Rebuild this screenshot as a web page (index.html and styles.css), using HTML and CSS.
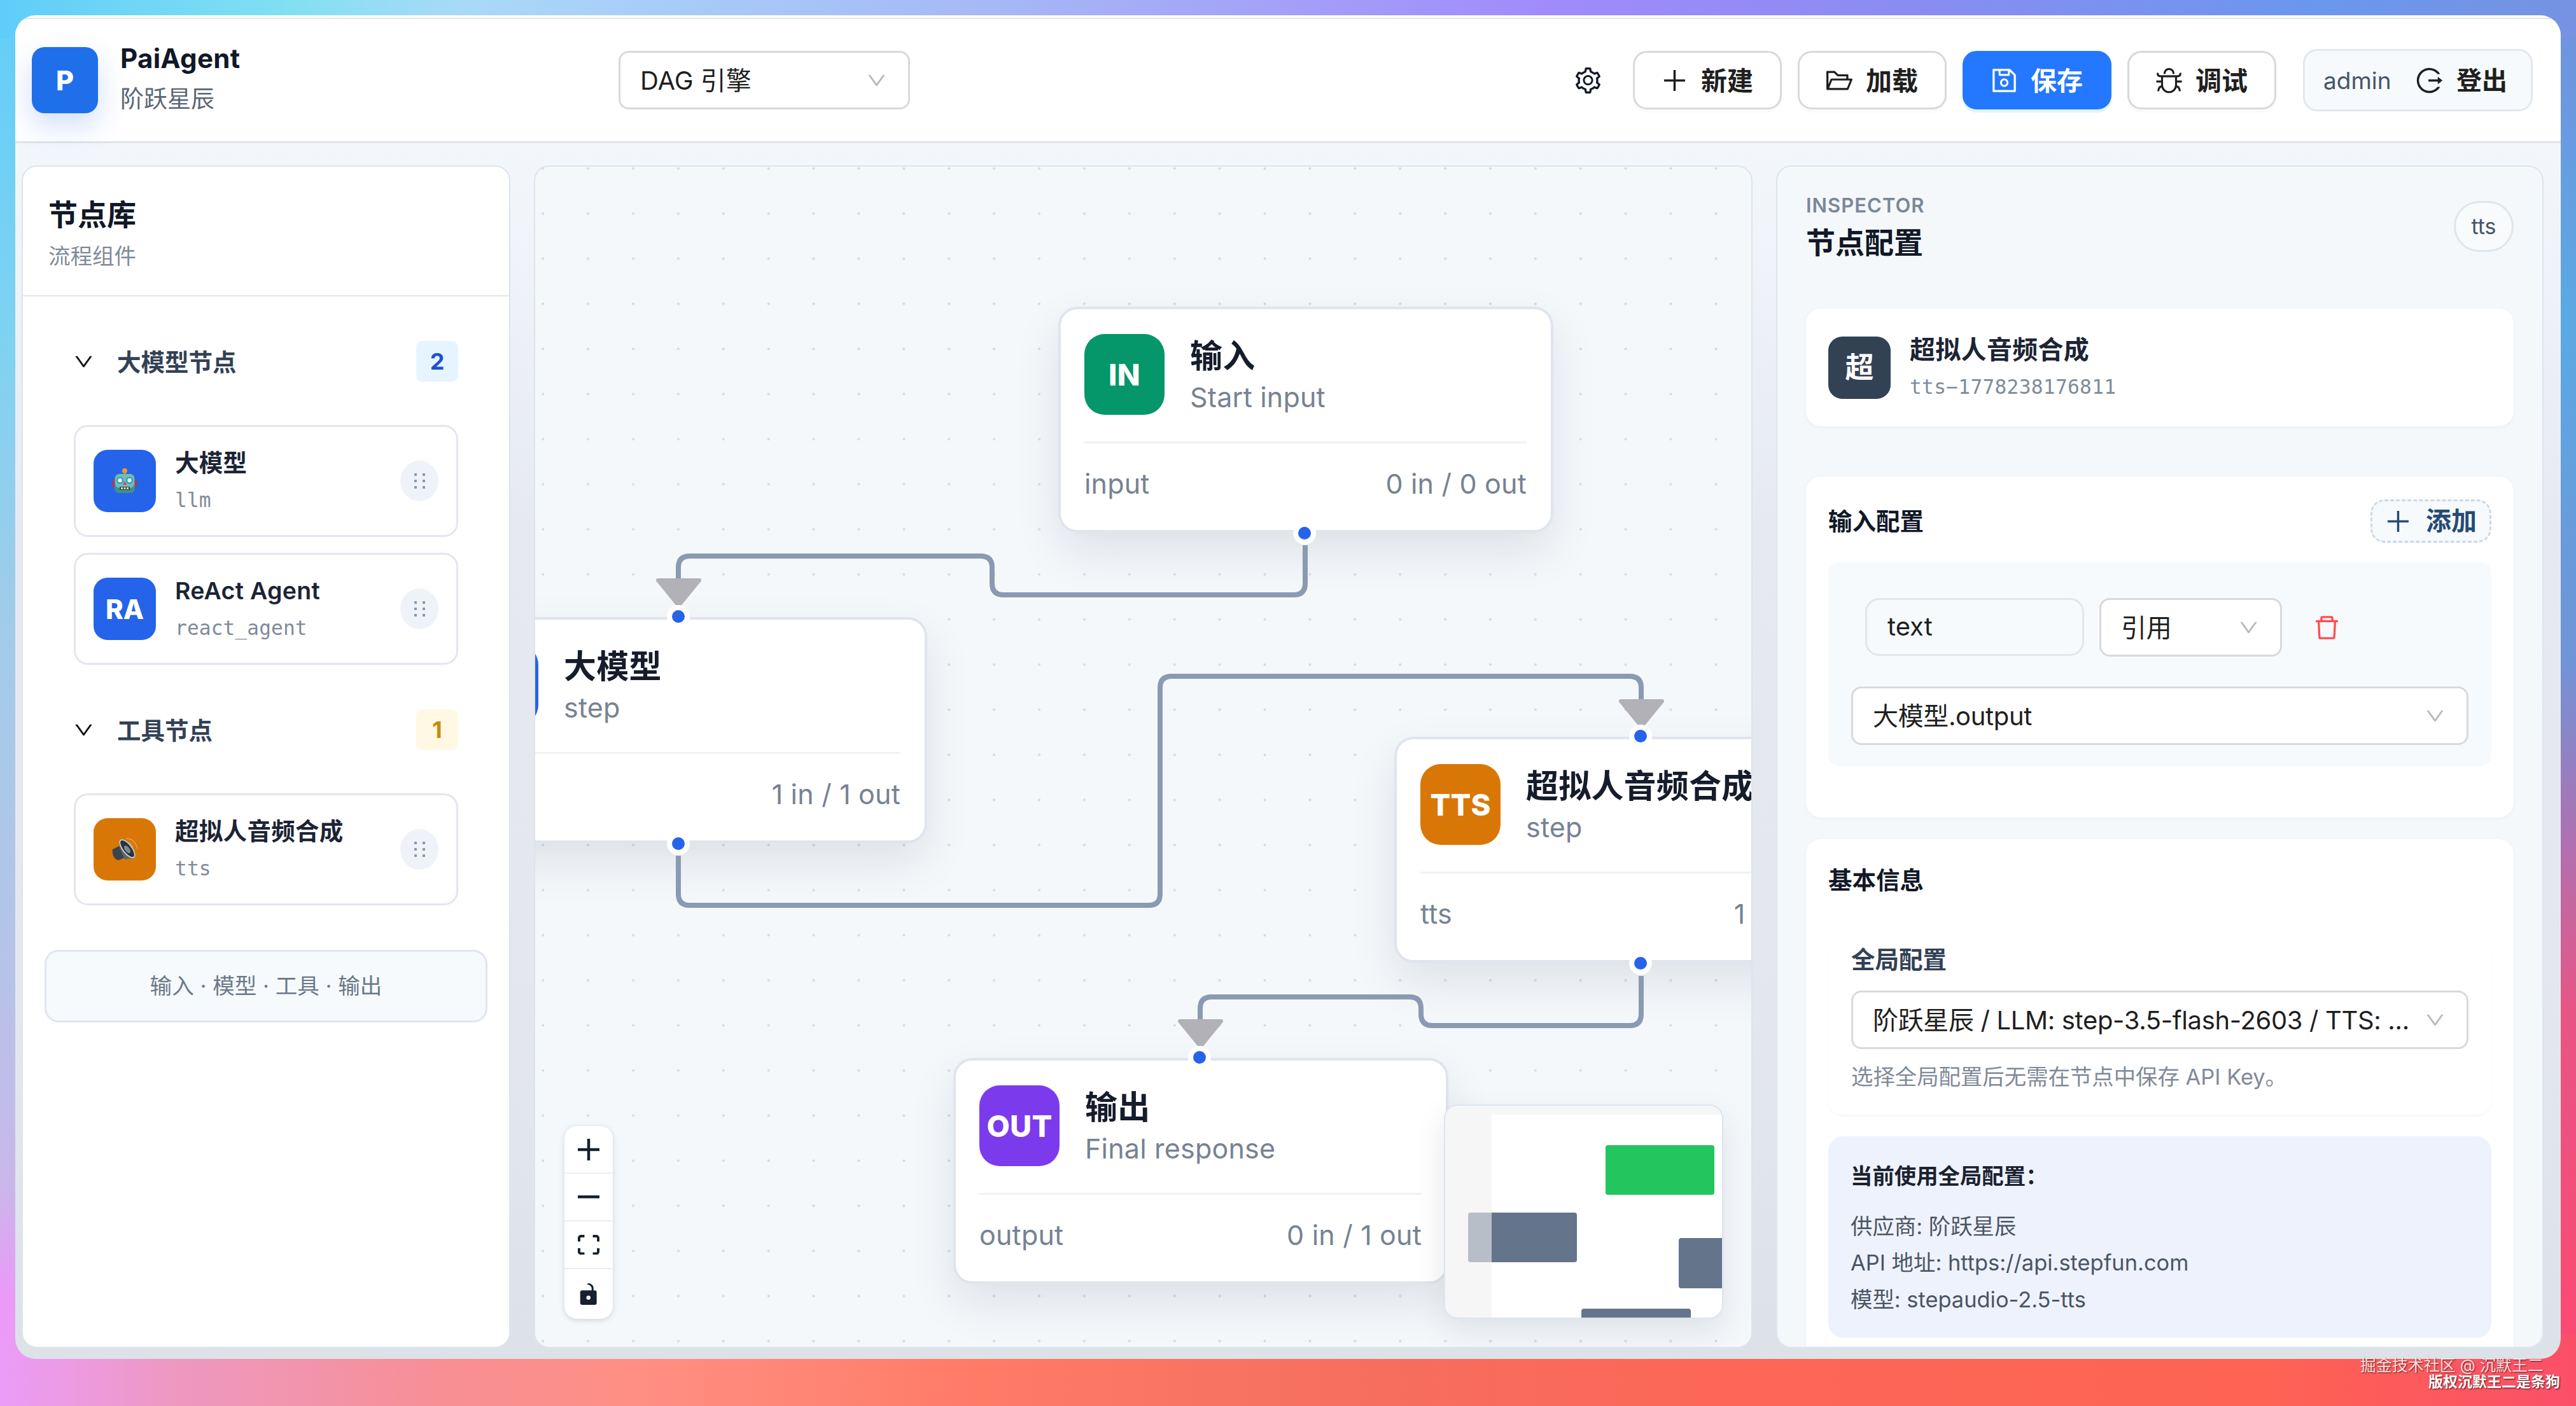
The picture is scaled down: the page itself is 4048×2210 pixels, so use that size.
FILE: index.html
```html
<!DOCTYPE html>
<html lang="zh-CN">

<head>
    <meta charset="UTF-8">
    <meta name="viewport" content="width=device-width, initial-scale=1.0">
    <title>PaiAgent</title>
    <link rel="stylesheet" href="styles.css">
</head>

<body>

    <!-- 图标 -->
    <svg class="sprite" aria-hidden="true">
        <symbol id="i-down" viewBox="64 64 896 896"><path d="M884 256h-75c-5.1 0-9.9 2.5-12.9 6.6L512 654.2 227.9 262.6c-3-4.1-7.8-6.6-12.9-6.6h-75c-6.5 0-10.3 7.4-6.5 12.7l352.6 486.1c12.8 17.6 39 17.6 51.7 0l352.6-486.1c3.9-5.3.1-12.7-6.4-12.7z"/></symbol>
        <symbol id="i-plus" viewBox="64 64 896 896"><path d="M482 152h60q8 0 8 8v704q0 8-8 8h-60q-8 0-8-8V160q0-8 8-8z"/><path d="M160 474h704q8 0 8 8v60q0 8-8 8H160q-8 0-8-8v-60q0-8 8-8z"/></symbol>
        <symbol id="i-setting" viewBox="64 64 896 896"><path d="M924.8 625.7l-65.5-56c3.1-19 4.7-38.4 4.7-57.8s-1.6-38.8-4.7-57.8l65.5-56a32.03 32.03 0 009.3-35.2l-.9-2.6a443.74 443.74 0 00-79.7-137.9l-1.8-2.1a32.12 32.12 0 00-35.1-9.5l-81.3 28.9c-30-24.6-63.5-44-99.7-57.6l-15.7-85a32.05 32.05 0 00-25.8-25.7l-2.7-.5c-52.1-9.4-106.9-9.4-159 0l-2.7.5a32.05 32.05 0 00-25.8 25.7l-15.8 85.4a351.86 351.86 0 00-99 57.4l-81.9-29.1a32 32 0 00-35.1 9.5l-1.8 2.1a446.02 446.02 0 00-79.7 137.9l-.9 2.6c-4.5 12.5-.8 26.5 9.3 35.2l66.3 56.6c-3.1 18.8-4.6 38-4.6 57.1 0 19.2 1.5 38.4 4.6 57.1L99 625.5a32.03 32.03 0 00-9.3 35.2l.9 2.6c18.1 50.4 44.9 96.9 79.7 137.9l1.8 2.1a32.12 32.12 0 0035.1 9.5l81.9-29.1c29.8 24.5 63.1 43.9 99 57.4l15.8 85.4a32.05 32.05 0 0025.8 25.7l2.7.5a449.4 449.4 0 00159 0l2.7-.5a32.05 32.05 0 0025.8-25.7l15.7-85a350 350 0 0099.7-57.6l81.3 28.9a32 32 0 0035.1-9.5l1.8-2.1c34.8-41.1 61.6-87.5 79.7-137.9l.9-2.6c4.5-12.3.8-26.3-9.3-35zM788.3 465.9c2.5 15.1 3.8 30.6 3.8 46.1s-1.3 31-3.8 46.1l-6.6 40.1 74.7 63.9a370.03 370.03 0 01-42.6 73.6L721 702.8l-31.4 25.8c-23.9 19.6-50.5 35-79.3 45.8l-38.1 14.3-17.9 97a377.5 377.5 0 01-85 0l-17.9-97.2-37.8-14.5c-28.5-10.8-55-26.2-78.7-45.7l-31.4-25.9-93.4 33.2c-17-22.9-31.2-47.6-42.6-73.6l75.5-64.5-6.5-40c-2.4-14.9-3.7-30.3-3.7-45.5 0-15.3 1.2-30.6 3.7-45.5l6.5-40-75.5-64.5c11.3-26.1 25.6-50.7 42.6-73.6l93.4 33.2 31.4-25.9c23.7-19.5 50.2-34.9 78.7-45.7l37.9-14.3 17.9-97.2c28.1-3.2 56.8-3.2 85 0l17.9 97 38.1 14.3c28.7 10.8 55.4 26.2 79.3 45.8l31.4 25.8 92.8-32.9c17 22.9 31.2 47.6 42.6 73.6L781.8 426l6.5 39.9zM512 326c-97.2 0-176 78.8-176 176s78.8 176 176 176 176-78.8 176-176-78.8-176-176-176zm79.2 255.2A111.6 111.6 0 01512 614c-29.9 0-58-11.7-79.2-32.8A111.6 111.6 0 01400 502c0-29.9 11.7-58 32.8-79.2C454 401.6 482.1 390 512 390c29.9 0 58 11.6 79.2 32.8A111.6 111.6 0 01624 502c0 29.9-11.7 58-32.8 79.2z"/></symbol>
        <symbol id="i-folder" viewBox="64 64 896 896"><path d="M928 444H820V330.4c0-17.7-14.3-32-32-32H473L355.7 186.2a8.15 8.15 0 00-5.5-2.2H96c-17.7 0-32 14.3-32 32v592c0 17.7 14.3 32 32 32h698c13 0 24.8-7.9 29.7-20l134-332c1.5-3.8 2.3-7.9 2.3-12 0-17.7-14.3-32-32-32zM136 256h188.5l119.6 114.4H748V444H238c-13 0-24.8 7.9-29.7 20L136 643.2V256zm635.3 512H159l103.3-256h612.4L771.3 768z"/></symbol>
        <symbol id="i-save" viewBox="64 64 896 896"><path d="M893.3 293.3L730.7 130.7c-7.5-7.5-16.7-13-26.7-16V112H144c-17.7 0-32 14.3-32 32v736c0 17.7 14.3 32 32 32h736c17.7 0 32-14.3 32-32V338.5c0-17-6.7-33.2-18.7-45.2zM384 184h256v104H384V184zm456 656H184V184h136v136c0 17.7 14.3 32 32 32h320c17.7 0 32-14.3 32-32V205.8l136 136V840zM512 442c-79.5 0-144 64.5-144 144s64.5 144 144 144 144-64.5 144-144-64.5-144-144-144zm0 224c-44.2 0-80-35.8-80-80s35.8-80 80-80 80 35.8 80 80-35.8 80-80 80z"/></symbol>
        <symbol id="i-bug" viewBox="64 64 896 896"><path fill="none" stroke="currentColor" stroke-width="68" d="M359 290V268a153 153 0 01306 0V290M119 250C119 330 160 366 220 366H804C864 366 905 330 905 250M272 366V672a240 240 0 00480 0V366M75 548H272M752 548H949M290 705C200 710 150 770 141 880M734 705C824 710 874 770 883 880"/></symbol>
        <symbol id="i-logout" viewBox="64 64 896 896"><path d="M868 732h-70.3c-4.8 0-9.3 2.1-12.3 5.8-7 8.5-14.5 16.7-22.4 24.5a353.84 353.84 0 01-112.7 75.9A352.8 352.8 0 01512.4 866c-47.9 0-94.3-9.4-137.9-27.8a353.84 353.84 0 01-112.7-75.9 353.28 353.28 0 01-76-112.5C167.3 606.2 158 559.9 158 512s9.4-94.2 27.8-137.8c17.8-42.1 43.4-80 76-112.5s70.5-58.1 112.7-75.9c43.6-18.4 90-27.8 137.9-27.8 47.9 0 94.3 9.3 137.9 27.8 42.2 17.8 80.1 43.4 112.7 75.9 7.9 7.9 15.3 16.1 22.4 24.5 3 3.7 7.6 5.8 12.3 5.8H868c6.3 0 10.2-7 6.7-12.3C798 160.5 663.8 81.6 511.3 82 271.7 82.6 79.6 277.1 82 516.4 84.4 751.9 276.2 942 512.4 942c152.1 0 285.7-78.8 362.3-197.7 3.4-5.3-.4-12.3-6.7-12.3zm88.9-226.3L815 393.7c-5.3-4.2-13-.4-13 6.3v76H488c-4.4 0-8 3.6-8 8v56c0 4.4 3.6 8 8 8h314v76c0 6.7 7.8 10.5 13 6.3l141.9-112a8 8 0 000-12.6z"/></symbol>
        <symbol id="i-delete" viewBox="64 64 896 896"><path d="M360 184h-8c4.4 0 8-3.6 8-8v8h304v-8c0 4.4 3.6 8 8 8h-8v72h72v-80c0-35.3-28.7-64-64-64H352c-35.3 0-64 28.7-64 64v80h72v-72zm504 72H160c-17.7 0-32 14.3-32 32v32c0 4.4 3.6 8 8 8h60.4l24.7 523c1.6 34.1 29.8 61 63.9 61h454c34.2 0 62.3-26.8 63.9-61l24.7-523H888c4.4 0 8-3.6 8-8v-32c0-17.7-14.3-32-32-32zM731.3 840H292.7l-24.2-512h487l-24.2 512z"/></symbol>
        <symbol id="i-drag" viewBox="0 0 60 60"><path d="M22 18h4v4h-4zM35 18h4v4h-4zM22 28h4v4h-4zM35 28h4v4h-4zM22 38h4v4h-4zM35 38h4v4h-4z"/></symbol>
    </svg>

    <div class="window">
        <!-- 顶部工具栏 -->
        <header class="header">
            <div class="brand">
                <div class="brand-logo">P</div>
                <div class="brand-text">
                    <div class="brand-name">PaiAgent</div>
                    <div class="brand-sub">阶跃星辰</div>
                </div>
            </div>
            <div class="select engine"><span>DAG 引擎</span><svg class="arrow"><use href="#i-down"/></svg></div>
            <div class="actions">
                <button class="btn-icon"><svg class="icon"><use href="#i-setting"/></svg></button>
                <button class="btn"><svg class="icon"><use href="#i-plus"/></svg><span>新建</span></button>
                <button class="btn"><svg class="icon"><use href="#i-folder"/></svg><span>加载</span></button>
                <button class="btn btn-primary"><svg class="icon"><use href="#i-save"/></svg><span>保存</span></button>
                <button class="btn"><svg class="icon"><use href="#i-bug"/></svg><span>调试</span></button>
                <div class="user">
                    <span class="user-name">admin</span>
                    <svg class="icon"><use href="#i-logout"/></svg>
                    <span class="logout">登出</span>
                </div>
            </div>
        </header>

        <main class="main">
            <!-- 节点库 -->
            <aside class="panel sidebar">
                <div class="sidebar-head">
                    <h2>节点库</h2>
                    <p>流程组件</p>
                </div>
                <div class="sidebar-body">
                    <div class="group">
                        <div class="group-row">
                            <svg class="group-arrow"><use href="#i-down"/></svg>
                            <span>大模型节点</span>
                            <b class="count">2</b>
                        </div>
                        <div class="item">
                            <div class="item-icon">
                                <svg width="38" height="40" viewBox="0 0 38 40">
                                    <rect x="0" y="17" width="6" height="13" rx="2" fill="#b5364a"/>
                                    <rect x="32" y="17" width="6" height="13" rx="2" fill="#b5364a"/>
                                    <rect x="17" y="4" width="4" height="7" fill="#7a8a90"/>
                                    <circle cx="19" cy="4" r="4" fill="#f09a1c"/>
                                    <rect x="3" y="9" width="32" height="30" rx="7" fill="#3f8f92"/>
                                    <rect x="4" y="9" width="30" height="22" rx="7" fill="#74bcba"/>
                                    <circle cx="11.500" cy="19" r="5.500" fill="#2b9fc0"/>
                                    <circle cx="26.500" cy="19" r="5.500" fill="#2b9fc0"/>
                                    <circle cx="11.500" cy="19" r="3.200" fill="#e8fbff"/>
                                    <circle cx="26.500" cy="19" r="3.200" fill="#e8fbff"/>
                                    <path d="M19 20l3 6h-6z" fill="#d8404a"/>
                                    <rect x="11" y="29" width="16" height="5" rx="1" fill="#26454a"/>
                                    <path d="M13 30h3v3h-3zM17.500 30h3v3h-3zM22 30h3v3h-3z" fill="#f4d68c"/>
                                </svg>
                            </div>
                            <div class="item-text"><b>大模型</b><code>llm</code></div>
                            <svg class="handle"><use href="#i-drag"/></svg>
                        </div>
                        <div class="item">
                            <div class="item-icon">RA</div>
                            <div class="item-text"><b>ReAct Agent</b><code>react_agent</code></div>
                            <svg class="handle"><use href="#i-drag"/></svg>
                        </div>
                    </div>
                    <div class="group">
                        <div class="group-row">
                            <svg class="group-arrow"><use href="#i-down"/></svg>
                            <span>工具节点</span>
                            <b class="count count-tool">1</b>
                        </div>
                        <div class="item">
                            <div class="item-icon item-icon-tool">
                                <svg width="42" height="40" viewBox="0 0 42 40">
                                    <path d="M2 20l10-5 9 18-9 4q-6 0-9-7-2-6-1-10z" fill="#3c444b"/>
                                    <path d="M12 15L15 4 35 34 21 36z" fill="#5d676f"/>
                                    <ellipse cx="25" cy="19" rx="8" ry="18" transform="rotate(-38 25 19)" fill="#2c3338"/>
                                    <ellipse cx="25" cy="19" rx="7" ry="17" transform="rotate(-38 25 19)" fill="none" stroke="#c3ccd0" stroke-width="2"/>
                                    <ellipse cx="25" cy="20" rx="3.500" ry="7" transform="rotate(-38 25 20)" fill="#7d8b93"/>
                                    <path d="M27 9q6 3 7 10M23 3q14 0 18 16" fill="none" stroke="#d9a45c" stroke-width="1.500"/>
                                </svg>
                            </div>
                            <div class="item-text"><b>超拟人音频合成</b><code>tts</code></div>
                            <svg class="handle"><use href="#i-drag"/></svg>
                        </div>
                    </div>
                    <div class="legend">输入 · 模型 · 工具 · 输出</div>
                </div>
            </aside>

            <!-- 画布 -->
            <section class="panel canvas">
                <div class="node node-input">
                    <div class="node-head">
                        <div class="node-icon">IN</div>
                        <div class="node-text"><b>输入</b><span>Start input</span></div>
                    </div>
                    <div class="node-foot"><span>input</span><span>0 in / 0 out</span></div>
                    <i class="port port-out"></i>
                </div>
                <div class="node node-llm">
                    <div class="node-head">
                        <div class="node-icon"></div>
                        <div class="node-text"><b>大模型</b><span>step</span></div>
                    </div>
                    <div class="node-foot"><span></span><span>1 in / 1 out</span></div>
                    <i class="port port-in"></i>
                    <i class="port port-out"></i>
                </div>
                <div class="node node-tts">
                    <div class="node-head">
                        <div class="node-icon">TTS</div>
                        <div class="node-text"><b>超拟人音频合成</b><span>step</span></div>
                    </div>
                    <div class="node-foot"><span>tts</span><span>1 in / 1 out</span></div>
                    <i class="port port-in"></i>
                    <i class="port port-out"></i>
                </div>
                <div class="node node-output">
                    <div class="node-head">
                        <div class="node-icon">OUT</div>
                        <div class="node-text"><b>输出</b><span>Final response</span></div>
                    </div>
                    <div class="node-foot"><span>output</span><span>0 in / 1 out</span></div>
                    <i class="port port-in"></i>
                </div>

                <!-- 连线 -->
                <svg class="edges" viewBox="842 263 1909 1854">
                    <g class="edge">
                        <path d="M2051 857V917Q2051 935 2033 935H1577Q1559 935 1559 917V892Q1559 874 1541 874H1084Q1066 874 1066 892V912"/>
                        <path d="M1066 1345V1405Q1066 1423 1084 1423H1805Q1823 1423 1823 1405V1081Q1823 1063 1841 1063H2561Q2579 1063 2579 1081V1101"/>
                        <path d="M2579 1534V1594Q2579 1612 2561 1612H2251Q2233 1612 2233 1594V1585Q2233 1567 2215 1567H1904Q1886 1567 1886 1585V1605"/>
                    </g>
                    <g class="edge-arrow">
                        <path d="M1034 912H1099L1068 950H1065Z"/>
                        <path d="M2547 1102H2612L2581 1140H2578Z"/>
                        <path d="M1854 1605H1919L1888 1643H1885Z"/>
                    </g>
                </svg>

                <div class="controls">
                    <button><svg viewBox="0 0 32 32"><path d="M32 18.133H18.133V32h-4.266V18.133H0v-4.266h13.867V0h4.266v13.867H32z"/></svg></button>
                    <button><svg viewBox="0 0 32 5"><path d="M0 0h32v4.200H0z"/></svg></button>
                    <button><svg viewBox="0 0 32 30"><path d="M3.692 4.630c0-.53.4-.938.939-.938h5.215V0H4.708C2.130 0 0 2.054 0 4.630v5.216h3.692V4.631zM27.354 0h-5.200v3.692h5.170c.53 0 .984.4.984.939v5.215H32V4.631A4.624 4.624 0 0027.354 0zm.954 24.830c0 .532-.4.94-.939.94h-5.215v3.768h5.215c2.577 0 4.631-2.130 4.631-4.707v-5.139h-3.692v5.139zm-23.677.94c-.531 0-.939-.4-.939-.94v-5.138H0v5.139c0 2.577 2.130 4.707 4.708 4.707h5.138V25.770H4.631z"/></svg></button>
                    <button><svg viewBox="0 0 25 32"><path d="M21.333 10.667H19.810V7.619C19.810 3.429 16.380 0 12.190 0c-4.114 1.828-1.370 2.133.305 2.438 1.676.305 4.420 2.590 4.420 5.181v3.048H3.047A3.056 3.056 0 000 13.714v15.238A3.056 3.056 0 003.048 32h18.285a3.056 3.056 0 003.048-3.048V13.714a3.056 3.056 0 00-3.048-3.047zM12.190 24.533a3.056 3.056 0 01-3.047-3.047 3.056 3.056 0 013.047-3.048 3.056 3.056 0 013.048 3.048 3.056 3.056 0 01-3.048 3.047z"/></svg></button>
                </div>

                <svg class="minimap" viewBox="0 0 435 333">
                    <rect x="252" y="62" width="171" height="78" rx="4" fill="#22c55e"/>
                    <rect x="36" y="168" width="171" height="78" rx="4" fill="#64748b"/>
                    <rect x="367" y="208" width="171" height="79" rx="4" fill="#64748b"/>
                    <rect x="214" y="319" width="172" height="78" rx="4" fill="#64748b"/>
                    <path class="minimap-mask" d="M0 0H435V14H73V333H0z"/>
                </svg>
            </section>

            <!-- 节点配置 -->
            <aside class="panel inspector">
                <div class="inspector-head">
                    <div>
                        <div class="eyebrow">INSPECTOR</div>
                        <h2>节点配置</h2>
                    </div>
                    <span class="pill">tts</span>
                </div>

                <div class="card summary">
                    <div class="summary-icon">超</div>
                    <div class="item-text"><b>超拟人音频合成</b><code>tts−1778238176811</code></div>
                </div>

                <div class="card inputs">
                    <div class="card-head">
                        <h3>输入配置</h3>
                        <button class="btn-add"><svg class="icon"><use href="#i-plus"/></svg>添加</button>
                    </div>
                    <div class="inputs-box">
                        <div class="inputs-row">
                            <div class="field">text</div>
                            <div class="select select-type"><span>引用</span><svg class="arrow"><use href="#i-down"/></svg></div>
                            <button class="btn-icon btn-delete"><svg class="icon"><use href="#i-delete"/></svg></button>
                        </div>
                        <div class="select"><span>大模型.output</span><svg class="arrow"><use href="#i-down"/></svg></div>
                    </div>
                </div>

                <div class="card basic">
                    <h3>基本信息</h3>
                    <div class="basic-box">
                        <label>全局配置</label>
                        <div class="select"><span>阶跃星辰 / LLM: step-3.5-flash-2603 / TTS: ...</span><svg class="arrow"><use href="#i-down"/></svg></div>
                        <p class="help">选择全局配置后无需在节点中保存 API Key。</p>
                    </div>
                    <div class="info">
                        <b>当前使用全局配置：</b>
                        <p>供应商: 阶跃星辰</p>
                        <p>API 地址: https://api.stepfun.com</p>
                        <p>模型: stepaudio-2.5-tts</p>
                    </div>
                </div>
            </aside>
        </main>
    </div>

    <!-- 水印 -->
    <div class="watermark">
        <span>掘金技术社区 @ 沉默王二</span>
        <b>版权沉默王二是条狗</b>
    </div>

</body>

</html>
```
FILE: styles.css
```css
* {
    box-sizing: border-box;
}

/* 页面背景：四周渐变边框 */
body {
    margin: 0;
    width: 4048px;
    height: 2210px;
    padding: 24px;
    position: relative;
    overflow: hidden;
    font-family: Inter, 'Noto Sans CJK SC', sans-serif;
    color: #111827;
    background:
        linear-gradient(90deg, #5fcdf9, #80e0f2 11%, #a9d9f9 18%, #a6b9f5 38%, #a18bfb 60%, #8a8cf2 74%, #6b97ee 90%, #7693e2) 0 0 / 100% 60px no-repeat,
        linear-gradient(90deg, #eb9cf8, #ee98c0 7%, #f78f95 17%, #ff8f83 25%, #ff7b66 38%, #f66f5f 52%, #fc6757 66%, #fe6353 88%, #fb4f68) 0 100% / 100% 112px no-repeat,
        linear-gradient(180deg, #62cef8, #7fd2f1 24%, #a3cbe9 46%, #b5c4e8 68%, #c8b8ea 84%, #e99bf7 92%, #eb9cf8) 0 0 / 60px 100% no-repeat,
        linear-gradient(180deg, #7391e0, #5aa9e3 23%, #7094d8 47%, #b070b0 60%, #e85585 72%, #fb4a72 95%) 100% 0 / 60px 100% no-repeat;
}

h2, h3, p {
    margin: 0;
}

button {
    margin: 0;
    padding: 0;
    border: none;
    background: none;
    font-family: inherit;
    color: inherit;
}

svg {
    flex: none;
    fill: currentColor;
}

code {
    font-family: 'DejaVu Sans Mono', monospace;
}

.sprite {
    position: absolute;
    width: 0;
    height: 0;
}

.window {
    height: 2112px;
    padding-top: 4px;
    display: flex;
    flex-direction: column;
    border-radius: 32px;
    overflow: hidden;
    background: linear-gradient(180deg, #fff 195px, #f3f7fb 202px, #f1f5fa 320px, #e6e9f1 800px, #e5e7ef 1500px, #dce2e8 2100px);
}

/* 顶部工具栏 */
.header {
    flex: 0 0 197px;
    display: flex;
    align-items: center;
    padding: 0 44px 0 26px;
    background: #fff;
    border-top: 2px solid #ece4e4;
    border-bottom: 3px solid #dfe3e8;
}

.brand {
    flex: 0 0 922px;
    display: flex;
    align-items: center;
    gap: 35px;
}

.brand-logo {
    width: 104px;
    height: 104px;
    border-radius: 20px;
    background: #1f6feb;
    box-shadow: 0 20px 46px rgba(31, 90, 235, 0.2);
    color: #fff;
    font-size: 43px;
    font-weight: 800;
    line-height: 104px;
    text-align: center;
}

.brand-text {
    padding-bottom: 4px;
    line-height: 64px;
}

.brand-name {
    font-size: 42px;
    font-weight: 700;
    letter-spacing: 0.3px;
}

.brand-sub {
    font-size: 37px;
    color: #5b6676;
}

.select {
    height: 92px;
    padding: 0 34px 0 35px;
    display: flex;
    align-items: center;
    justify-content: space-between;
    border: 3px solid #d9d9d9;
    border-radius: 16px;
    background: #fff;
    font-size: 40px;
    letter-spacing: -0.35px;
    color: #1f1f1f;
    white-space: nowrap;
}

.select span {
    margin-left: -4px;
    padding-bottom: 4px;
}

.arrow {
    width: 31px;
    height: 31px;
    color: #b8b8b8;
}

.engine {
    width: 458px;
    letter-spacing: 0;
}

.actions {
    margin-left: auto;
    display: flex;
    align-items: center;
    gap: 25px;
}

.icon {
    width: 41px;
    height: 41px;
}

.btn-icon {
    width: 92px;
    height: 92px;
    display: flex;
    align-items: center;
    justify-content: center;
}

.btn {
    width: 234px;
    height: 92px;
    display: flex;
    align-items: center;
    justify-content: center;
    gap: 21px;
    border: 3px solid #d9d9d9;
    border-radius: 22px;
    background: #fff;
    box-shadow: 0 5px 0 rgba(0, 0, 0, 0.02);
    font-size: 41px;
    font-weight: 600;
    color: #1f1f1f;
}

.btn span {
    padding-bottom: 4px;
}

.btn-primary {
    border-color: #2478ff;
    background: #2478ff;
    box-shadow: 0 5px 0 #e0f3ff;
    color: #fff;
}

.user {
    width: 361px;
    height: 98px;
    margin-left: 17px;
    padding: 0 37px 0 29px;
    display: flex;
    align-items: center;
    border: 3px solid #e2e8ee;
    border-radius: 22px;
    background: #f7fafc;
    color: #1f1f1f;
}

.user-name {
    margin-right: auto;
    font-size: 37px;
    color: #475569;
}

.logout {
    margin-left: 22px;
    padding-bottom: 4px;
    font-size: 40px;
    font-weight: 600;
}

/* 三栏布局 */
.main {
    flex: 1;
    display: grid;
    grid-template-columns: 768px 1fr 1206px;
    gap: 37px;
    padding: 35px 27px 17px 10px;
    min-height: 0;
}

.panel {
    min-width: 0;
    border: 2px solid #dde4ec;
    border-radius: 24px;
    overflow: hidden;
}

/* 节点库 */
.sidebar {
    background: #fff;
}

.sidebar-head {
    padding: 42px 40px 28px;
    border-bottom: 2px solid #e0e6ee;
    line-height: 66px;
}

.sidebar-head h2 {
    font-size: 46px;
    font-weight: 600;
}

.sidebar-head p {
    font-size: 34.5px;
    color: #7f8b9a;
}

.sidebar-body {
    padding: 70px 34px 0;
}

.group {
    padding: 0 46px;
    margin-bottom: 70px;
    display: flex;
    flex-direction: column;
    gap: 25px;
}

.group-row {
    height: 64px;
    margin-bottom: 43px;
    display: flex;
    align-items: center;
    font-size: 37.5px;
    font-weight: 600;
    color: #334155;
}

.group-row span {
    padding-bottom: 4px;
}

.group-arrow {
    width: 31px;
    height: 31px;
    margin-right: 37px;
    color: #111;
}

.count {
    width: 66px;
    height: 64px;
    margin-left: auto;
    border-radius: 10px;
    background: #e6f4ff;
    color: #1d4fcf;
    font-size: 36px;
    font-weight: 700;
    line-height: 64px;
    text-align: center;
}

.count-tool {
    background: #fff8e3;
    color: #c98a0c;
}

.item {
    height: 176px;
    padding: 0 28px;
    display: flex;
    align-items: center;
    border: 3px solid #e2e6f0;
    border-radius: 22px;
    background: #fff;
}

.item-icon {
    width: 98px;
    height: 98px;
    margin-right: 30px;
    display: flex;
    align-items: center;
    justify-content: center;
    border-radius: 22px;
    background: #2563eb;
    color: #fff;
    font-size: 42px;
    font-weight: 800;
}

.item-icon-tool {
    background: #d97706;
}

.item-text {
    flex: 1;
    display: flex;
    flex-direction: column;
}

.item-text b {
    font-size: 37.5px;
    font-weight: 600;
    line-height: 60px;
    letter-spacing: 0.3px;
    color: #1c2434;
}

.item-text code {
    font-size: 31.2px;
    line-height: 56px;
    letter-spacing: 0.1px;
    color: #7f8b9a;
}

.handle {
    width: 60px;
    height: 64px;
    border-radius: 50%;
    background: #eff3f9;
    color: #8d97a8;
}

.legend {
    height: 114px;
    border: 3px solid #e0e5f0;
    border-radius: 22px;
    background: #f7fafc;
    font-size: 34.6px;
    line-height: 107px;
    text-align: center;
    color: #6b788a;
}

/* 画布 */
.canvas {
    position: relative;
    background-color: #f5f8fb;
    background-image: radial-gradient(circle at center, #d4dae0 1.8px, transparent 2.3px);
    background-size: 70.9px 70.9px;
    background-position: -23.2px -32.6px;
}

.node {
    position: absolute;
    width: 778px;
    height: 355px;
    padding: 39px 38px 0 37px;
    border: 4px solid #dfe4ee;
    border-radius: 30px;
    background: #fff;
    box-shadow: 0 30px 70px rgba(15, 23, 42, 0.1);
    color: #778292;
    font-size: 43px;
    letter-spacing: 0.2px;
}

.node-input {
    left: 822px;
    top: 220px;
}

.node-llm {
    left: -162px;
    top: 708px;
}

.node-tts {
    left: 1350px;
    top: 896px;
}

.node-output {
    left: 657px;
    top: 1401px;
}

.node-head {
    height: 169px;
    display: flex;
    align-items: flex-start;
    gap: 40px;
}

.node-icon {
    flex: none;
    width: 126px;
    height: 127px;
    border-radius: 32px;
    background: #059669;
    color: #fff;
    font-size: 47px;
    font-weight: 800;
    line-height: 127px;
    text-align: center;
}

.node-llm .node-icon {
    background: #2563eb;
}

.node-tts .node-icon {
    background: #d97706;
}

.node-output .node-icon {
    background: #7c3aed;
}

.node-text {
    padding-top: 3px;
    display: flex;
    flex-direction: column;
    line-height: 64px;
    white-space: nowrap;
}

.node-text b {
    font-size: 51px;
    font-weight: 600;
    color: #151c2b;
}

.node-foot {
    display: flex;
    justify-content: space-between;
    border-top: 3px solid #f0f2f5;
    line-height: 127px;
}

/* 连接点 */
.port {
    position: absolute;
    z-index: 2;
    left: 365px;
    width: 36px;
    height: 36px;
    border: 8px solid #fff;
    border-radius: 50%;
    background: #2563eb;
}

.port-in {
    top: -23px;
}

.port-out {
    bottom: -23px;
}

.edges {
    position: absolute;
    left: 1px;
    top: 1px;
    width: 1909px;
    height: 1854px;
}

.edge {
    fill: none;
    stroke: #8b9ab3;
    stroke-width: 8;
}

.edge-arrow {
    fill: #b1b1b7;
    stroke: #b1b1b7;
    stroke-width: 6;
    stroke-linejoin: round;
}

.controls {
    position: absolute;
    left: 46px;
    bottom: 44px;
    width: 76px;
    border-radius: 20px;
    background: #fff;
    box-shadow: 0 2px 10px rgba(15, 23, 42, 0.16);
    overflow: hidden;
}

.controls button {
    width: 76px;
    height: 75px;
    display: flex;
    align-items: center;
    justify-content: center;
    border-bottom: 2px solid #eceef1;
    color: #16202e;
}

.controls button:last-child {
    border-bottom: none;
    height: 78px;
}

.controls svg {
    width: 34px;
    max-height: 34px;
}

.minimap {
    position: absolute;
    right: 44px;
    bottom: 44px;
    width: 439px;
    height: 337px;
    border: 2px solid #dbe5ef;
    border-radius: 22px;
    background: #fff;
    box-shadow: 0 20px 50px rgba(15, 23, 42, 0.1);
}

.minimap-mask {
    fill: rgba(240, 240, 240, 0.6);
}

/* 节点配置 */
.inspector {
    padding: 0 45px;
    background: #f4f8fb;
}

.inspector-head {
    height: 188px;
    display: flex;
    align-items: center;
    justify-content: space-between;
}

.eyebrow {
    font-size: 31px;
    font-weight: 600;
    line-height: 50px;
    letter-spacing: 1px;
    color: #7c8798;
}

.inspector-head h2 {
    font-size: 46px;
    font-weight: 600;
    line-height: 66px;
}

.pill {
    width: 94px;
    height: 80px;
    border: 3px solid #e0e5ea;
    border-radius: 40px;
    background: #f8fafc;
    font-size: 34px;
    line-height: 74px;
    text-align: center;
    color: #475569;
}

.card {
    padding: 0 35px;
    border-radius: 24px;
    background: #fff;
    box-shadow: 0 2px 6px rgba(15, 23, 42, 0.04);
}

.card h3 {
    font-size: 37.5px;
    font-weight: 600;
    line-height: 57px;
}

.summary {
    height: 185px;
    margin-top: 35px;
    display: flex;
    align-items: center;
}

.summary .item-text b {
    font-size: 40px;
}

.summary .item-text code {
    letter-spacing: 0.3px;
}

.summary-icon {
    width: 98px;
    height: 98px;
    margin-right: 30px;
    border-radius: 22px;
    background: #334155;
    color: #fff;
    font-size: 45px;
    font-weight: 600;
    line-height: 98px;
    text-align: center;
}

.inputs {
    height: 536px;
    margin-top: 79px;
    padding-top: 36px;
}

.card-head {
    height: 68px;
    display: flex;
    align-items: center;
    justify-content: space-between;
}

.btn-add {
    width: 190px;
    height: 68px;
    display: flex;
    align-items: center;
    justify-content: center;
    gap: 23px;
    border: 3px dashed #ccd9e6;
    border-radius: 22px;
    background: #f6fafd;
    font-size: 40px;
    font-weight: 600;
    line-height: 54px;
    color: #274a73;
}

.inputs-box {
    margin-top: 31px;
    padding: 56px 36px 33px;
    border-radius: 16px;
    background: #f7fafc;
}

.inputs-row {
    margin-bottom: 47px;
    padding-left: 22px;
    display: flex;
    gap: 24px;
}

.field {
    width: 344px;
    height: 91px;
    padding-left: 32px;
    border: 3px solid #e1e6eb;
    border-radius: 22px;
    font-size: 40px;
    line-height: 84px;
    color: #1f1f1f;
}

.select-type {
    width: 287px;
}

.btn-delete {
    color: #ff4d4f;
}

.basic {
    height: 900px;
    margin-top: 34px;
    padding-top: 36px;
}

.basic-box {
    margin-top: 57px;
    padding: 10px 36px 32px;
    border-radius: 22px;
    box-shadow: 0 3px 3px rgba(15, 23, 42, 0.03);
}

.basic-box label {
    display: block;
    margin-bottom: 18px;
    font-size: 37.5px;
    font-weight: 600;
    line-height: 60px;
    color: #334155;
}

.help {
    margin-top: 16px;
    font-size: 34.4px;
    line-height: 55px;
    color: #808a98;
}

.info {
    margin-top: 34px;
    padding: 34px 35px 32px;
    border-radius: 24px;
    background: #eef2fd;
    font-size: 34.4px;
    line-height: 57.5px;
    color: #4b5563;
}

.info b {
    display: block;
    margin-bottom: 21px;
    font-weight: 700;
    color: #1b2230;
}

/* 水印 */
.watermark {
    position: absolute;
    right: 25px;
    bottom: 25px;
    display: flex;
    flex-direction: column;
    align-items: flex-end;
    color: #fff;
    font-size: 23px;
    line-height: 26px;
    text-shadow: 1px 1px 2px rgba(0, 0, 0, 0.8);
}

.watermark span {
    margin-right: 26px;
    font-size: 25px;
    opacity: 0.8;
}
```
